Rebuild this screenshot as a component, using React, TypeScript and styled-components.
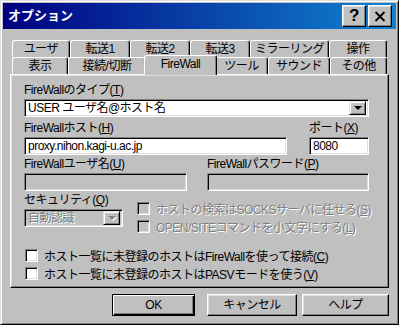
import * as React from 'react';
import styled, { createGlobalStyle } from 'styled-components';

const Global = createGlobalStyle`
    html, body {
        margin: 0;
        padding: 0;
        background: #c0c0c0;
    }
    body {
        font-family: "Liberation Sans", "Noto Sans CJK JP", sans-serif;
        font-size: 12px;
        letter-spacing: -0.5px;
        color: #000;
    }
`;

const Window = styled.div`
    width: 399px;
    height: 325px;
    box-sizing: border-box;
    background: #c0c0c0;
    border: 1px solid;
    border-color: #dfdfdf #000 #000 #dfdfdf;
    box-shadow: inset 1px 1px #fff, inset -1px -1px #808080;
    padding: 2px;
    display: flex;
    flex-direction: column;
`;

const TitleBar = styled.div`
    height: 26px;
    background: linear-gradient(to right, #000080, #1084d0);
    display: flex;
    align-items: center;
    padding: 0 4px 0 5px;
    gap: 2px;
`;

const TitleText = styled.span`
    flex: 1;
    color: #fff;
    font-weight: bold;
    font-size: 13px;
    letter-spacing: 0;
    line-height: 16px;
`;

const TitleButton = styled.button`
    all: unset;
    box-sizing: border-box;
    width: 24px;
    height: 22px;
    background: #c0c0c0;
    border: 1px solid;
    border-color: #fff #000 #000 #fff;
    box-shadow: inset -1px -1px #808080, inset 1px 1px #dfdfdf;
    display: flex;
    align-items: center;
    justify-content: center;
    font-family: "Liberation Sans", sans-serif;
    font-weight: bold;
    font-size: 17px;
`;

const Body = styled.div`
    flex: 1;
    display: flex;
    flex-direction: column;
    padding: 11px 7px 0 7px;
`;

const TabStrip = styled.div`
    display: flex;
    flex-direction: column;
    padding: 0 2px;
`;

const TabRow = styled.div`
    display: flex;
    height: 17px;
`;

const Tab = styled.div<{ $w: number; $active?: boolean }>`
    box-sizing: border-box;
    flex: none;
    width: ${p => p.$active ? p.$w + 4 : p.$w}px;
    height: ${p => p.$active ? 20 : 17}px;
    margin: ${p => p.$active ? '-2px -2px -1px -2px' : '0'};
    position: ${p => p.$active ? 'relative' : 'static'};
    z-index: ${p => p.$active ? 1 : 0};
    background: #c0c0c0;
    border-top: 1px solid #fff;
    border-left: 1px solid #fff;
    border-right: 1px solid #000;
    border-radius: 3px 3px 0 0;
    box-shadow: inset -1px 0 #808080;
    display: flex;
    justify-content: center;
    padding-top: 1px;
    line-height: 14px;
    white-space: nowrap;
`;

const Panel = styled.div`
    box-sizing: border-box;
    height: 214px;
    border: 1px solid;
    border-color: #fff #000 #000 #fff;
    box-shadow: inset -1px -1px #808080, inset 1px 1px #dfdfdf;
    padding: 7px 17px 0 13px;
    display: flex;
    flex-direction: column;
`;

const Section = styled.div`
    display: flex;
    flex-direction: column;
    gap: 1px;
`;

const Label = styled.div`
    height: 16px;
    line-height: 16px;
    white-space: nowrap;
`;

const U = styled.span`
    text-decoration: underline;
`;

const Field = styled.div<{ $disabled?: boolean; $mr?: number }>`
    box-sizing: border-box;
    height: 18px;
    margin-right: ${p => p.$mr ?? 0}px;
    background: ${p => p.$disabled ? '#c0c0c0' : '#fff'};
    border: 1px solid;
    border-color: #808080 #fff #fff #808080;
    box-shadow: inset 1px 1px #000, inset -1px -1px #dfdfdf;
    display: flex;
    align-items: center;
    padding: 0 2px 0 3px;
    line-height: 14px;
    white-space: nowrap;
`;

const FieldText = styled.span<{ $disabled?: boolean }>`
    flex: 1;
    color: ${p => p.$disabled ? '#808080' : '#000'};
    text-shadow: ${p => p.$disabled ? '1px 1px #fff' : 'none'};
`;

const DropButton = styled.div`
    box-sizing: border-box;
    width: 17px;
    height: 14px;
    background: #c0c0c0;
    border: 1px solid;
    border-color: #dfdfdf #000 #000 #dfdfdf;
    box-shadow: inset 1px 1px #fff, inset -1px -1px #808080;
    display: flex;
    align-items: center;
    justify-content: center;
`;

const Arrow = styled.div<{ $disabled?: boolean }>`
    width: 0;
    height: 0;
    border-left: 4px solid transparent;
    border-right: 4px solid transparent;
    border-top: 4px solid ${p => p.$disabled ? '#808080' : '#000'};
    filter: ${p => p.$disabled ? 'drop-shadow(1px 1px 0 #fff)' : 'none'};
`;

const Pair = styled.div<{ $cols: string; $gap: number; $mt?: number }>`
    display: grid;
    grid-template-columns: ${p => p.$cols};
    column-gap: ${p => p.$gap}px;
    margin-top: ${p => p.$mt ?? 0}px;
`;

const SecurityRow = styled.div`
    display: flex;
    gap: 14px;
    margin-top: 1px;
`;

const SecurityCol = styled.div`
    width: 99px;
    display: flex;
    flex-direction: column;
    gap: 1px;
`;

const CheckGroup = styled.div<{ $mt?: number; $ml?: number }>`
    display: flex;
    flex-direction: column;
    margin-top: ${p => p.$mt ?? 0}px;
    margin-left: ${p => p.$ml ?? 0}px;
`;

const CheckRow = styled.label`
    height: 18px;
    display: flex;
    align-items: center;
    gap: 6px;
    white-space: nowrap;
`;

const CheckText = styled.span<{ $disabled?: boolean }>`
    color: ${p => p.$disabled ? '#808080' : '#000'};
    text-shadow: ${p => p.$disabled ? '1px 1px #fff' : 'none'};
`;

const Box = styled.span<{ $disabled?: boolean }>`
    box-sizing: border-box;
    flex: none;
    width: 13px;
    height: 13px;
    background: ${p => p.$disabled ? '#c0c0c0' : '#fff'};
    border: 1px solid;
    border-color: #808080 #fff #fff #808080;
    box-shadow: inset 1px 1px #000, inset -1px -1px #dfdfdf;
`;

const ButtonRow = styled.div`
    display: flex;
    justify-content: flex-end;
    padding-top: 6px;
`;

const PushButton = styled.button<{ $w: number; $ml: number; $default?: boolean }>`
    all: unset;
    box-sizing: border-box;
    width: ${p => p.$w}px;
    height: 22px;
    margin-left: ${p => p.$ml}px;
    background: #c0c0c0;
    border: 1px solid;
    border-color: ${p => p.$default ? '#000' : '#fff #000 #000 #fff'};
    box-shadow: ${p => p.$default
        ? 'inset 1px 1px #fff, inset -1px -1px #000, inset -2px -2px #808080'
        : 'inset -1px -1px #808080, inset 1px 1px #dfdfdf'};
    display: flex;
    align-items: center;
    justify-content: center;
    line-height: 14px;
`;

const row1: [string, number][] = [
    ['ユーザ', 58], ['転送1', 60], ['転送2', 60], ['転送3', 60], ['ミラーリング', 79], ['操作', 58],
];
const row2: [string, number][] = [
    ['表示', 56], ['接続/切断', 78], ['FireWall', 69], ['ツール', 53], ['サウンド', 62], ['その他', 57],
];

export default function App() {
    return <>
        <Global />
        <Window>
            <TitleBar>
                <TitleText>オプション</TitleText>
                <TitleButton>?</TitleButton>
                <TitleButton>
                    <svg width="12" height="11" viewBox="0 0 12 11">
                        <path d="M1.5 1 L10.5 10 M10.5 1 L1.5 10" stroke="#000" strokeWidth="1.8" />
                    </svg>
                </TitleButton>
            </TitleBar>
            <Body>
                <TabStrip>
                    <TabRow>
                        {row1.map(([t, w]) => <Tab key={t} $w={w}>{t}</Tab>)}
                    </TabRow>
                    <TabRow>
                        {row2.map(([t, w]) => <Tab key={t} $w={w} $active={t === 'FireWall'}>{t}</Tab>)}
                    </TabRow>
                </TabStrip>
                <Panel>
                    <Section>
                        <Label>FireWallのタイプ(<U>T</U>)</Label>
                        <Field $mr={2}>
                            <FieldText>USER ユーザ名@ホスト名</FieldText>
                            <DropButton><Arrow /></DropButton>
                        </Field>
                    </Section>
                    <Pair $cols="263px 60px" $gap={22} $mt={3}>
                        <Section>
                            <Label>FireWallホスト(<U>H</U>)</Label>
                            <Field><FieldText>proxy.nihon.kagi-u.ac.jp</FieldText></Field>
                        </Section>
                        <Section>
                            <Label>ポート(<U>X</U>)</Label>
                            <Field><FieldText>8080</FieldText></Field>
                        </Section>
                    </Pair>
                    <Pair $cols="163px 162px" $gap={20} $mt={1}>
                        <Section>
                            <Label>FireWallユーザ名(<U>U</U>)</Label>
                            <Field $disabled />
                        </Section>
                        <Section>
                            <Label>FireWallパスワード(<U>P</U>)</Label>
                            <Field $disabled />
                        </Section>
                    </Pair>
                    <SecurityRow>
                        <SecurityCol>
                            <Label>セキュリティ(<U>Q</U>)</Label>
                            <Field $disabled>
                                <FieldText $disabled>自動認識</FieldText>
                                <DropButton><Arrow $disabled /></DropButton>
                            </Field>
                        </SecurityCol>
                        <CheckGroup $mt={7}>
                            <CheckRow>
                                <Box $disabled />
                                <CheckText $disabled>ホストの検索はSOCKSサーバに任せる(<U>S</U>)</CheckText>
                            </CheckRow>
                            <CheckRow>
                                <Box $disabled />
                                <CheckText $disabled>OPEN/SITEコマンドを小文字にする(<U>L</U>)</CheckText>
                            </CheckRow>
                        </CheckGroup>
                    </SecurityRow>
                    <CheckGroup $mt={11} $ml={1}>
                        <CheckRow>
                            <Box />
                            <CheckText>ホスト一覧に未登録のホストはFireWallを使って接続(<U>C</U>)</CheckText>
                        </CheckRow>
                        <CheckRow>
                            <Box />
                            <CheckText>ホスト一覧に未登録のホストはPASVモードを使う(<U>V</U>)</CheckText>
                        </CheckRow>
                    </CheckGroup>
                </Panel>
                <ButtonRow>
                    <PushButton $w={83} $ml={0} $default>OK</PushButton>
                    <PushButton $w={90} $ml={12}>キャンセル</PushButton>
                    <PushButton $w={87} $ml={5}>ヘルプ</PushButton>
                </ButtonRow>
            </Body>
        </Window>
    </>;
}
